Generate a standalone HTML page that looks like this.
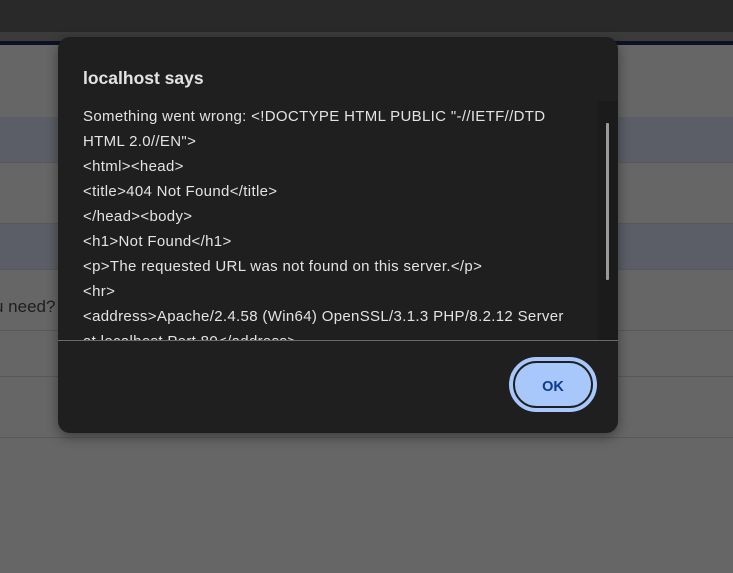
<!DOCTYPE html>
<html><head><meta charset="utf-8"><style>
*{margin:0;padding:0;box-sizing:border-box}
body{width:733px;height:573px;overflow:hidden;background:#666;position:relative;font-family:"Liberation Sans",sans-serif}
.top{position:absolute;left:0;top:0;width:733px;height:32px;background:#292929}
.strip{position:absolute;left:0;top:32px;width:733px;height:9px;background:#3b3b3b}
.navy{position:absolute;left:0;top:41px;width:733px;height:4px;background:#0b1226}
.row{position:absolute;left:0;width:733px}
.line{position:absolute;left:0;width:733px;height:1px;background:#595959}
.bg{font-size:17px;color:#1e1e1e;position:absolute;left:-6px;top:297px}
.dlg{position:absolute;left:58px;top:37px;width:560px;height:396px;background:#1f1f1f;border-radius:12px;box-shadow:0 4px 12px rgba(0,0,0,.4);overflow:hidden}
.title{position:absolute;left:25px;top:31px;font-size:17.5px;font-weight:bold;color:#e3e3e3}
.scroll{position:absolute;left:0;top:64px;width:560px;height:239px;overflow:hidden}
.track{position:absolute;left:539px;top:0;width:21px;height:239px;background:#1b1b1b}
.thumb{position:absolute;left:548px;top:22px;width:3px;height:157px;background:#9a9a9a;border-radius:1px}
.txt{position:absolute;left:25px;top:3px;font-size:15px;letter-spacing:0.33px;line-height:25px;color:#e3e3e3;white-space:pre}
.div{position:absolute;left:0;top:303px;width:560px;height:1px;background:#6a6a6a}
.btn{position:absolute;left:451px;top:320px;width:88px;height:55px;border-radius:28px;background:#a8c7fa;border:3px solid #a8c7fa}
.btn::after{content:"";position:absolute;left:1px;top:1px;right:1px;bottom:1px;border-radius:24px;border:2px solid #1f1f1f}
.btn span{position:absolute;left:0;right:0;top:19px;text-align:center;color:#0b3b8c;font-size:14.5px;font-weight:bold}
</style></head><body>
<div class="top"></div><div class="strip"></div><div class="navy"></div>
<div class="row" style="top:117px;height:45px;background:#5b5e66"></div>
<div class="line" style="top:162px"></div>
<div class="line" style="top:223px"></div>
<div class="row" style="top:224px;height:45px;background:#5b5e66"></div>
<div class="line" style="top:269px"></div>
<div class="bg">u need?</div>
<div class="line" style="top:330px"></div>
<div class="line" style="top:376px"></div>
<div class="line" style="top:437px"></div>
<div class="dlg">
<div class="title">localhost says</div>
<div class="scroll">
<div class="txt">Something went wrong: &lt;!DOCTYPE HTML PUBLIC "-//IETF//DTD
HTML 2.0//EN"&gt;
&lt;html&gt;&lt;head&gt;
&lt;title&gt;404 Not Found&lt;/title&gt;
&lt;/head&gt;&lt;body&gt;
&lt;h1&gt;Not Found&lt;/h1&gt;
&lt;p&gt;The requested URL was not found on this server.&lt;/p&gt;
&lt;hr&gt;
&lt;address&gt;Apache/2.4.58 (Win64) OpenSSL/3.1.3 PHP/8.2.12 Server
at localhost Port 80&lt;/address&gt;
&lt;/body&gt;&lt;/html&gt;</div>
<div class="track"></div><div class="thumb"></div>
</div>
<div class="div"></div>
<div class="btn"><span>OK</span></div>
</div>
</body></html>
